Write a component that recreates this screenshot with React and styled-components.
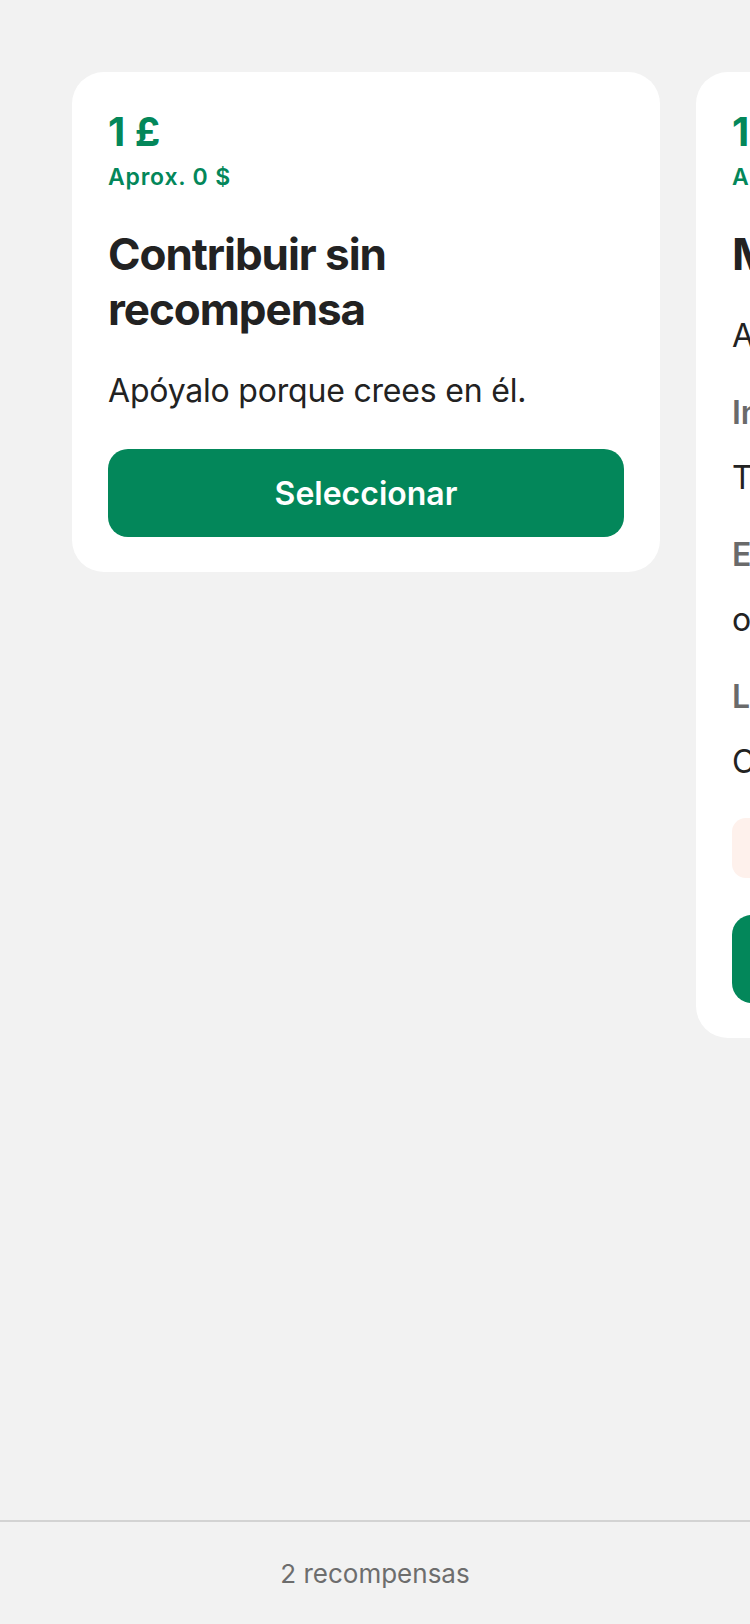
import React from 'react'
import styled, { createGlobalStyle } from 'styled-components'

const GlobalStyle = createGlobalStyle`
    html, body {
        margin: 0;
        padding: 0;
        background: #f2f2f2;
        overflow: hidden;
    }
    body {
        font-family: Inter, "Noto Sans", "Liberation Sans", sans-serif;
        color: #222222;
    }
`

const rewards = [
    {
        id: 0,
        price: '1 £',
        approx: 'Aprox. 0 $',
        title: 'Contribuir sin recompensa',
        description: 'Apóyalo porque crees en él.',
        details: [],
    },
    {
        id: 1,
        price: '15 £',
        approx: 'Aprox. 19 $',
        title: 'Mención especial',
        description: 'Agradecimiento en nuestra web.',
        details: [
            { label: 'Incluye', value: 'Tarjeta digital de agradecimiento' },
            { label: 'Entrega estimada', value: 'oct. 2025' },
            { label: 'Lugares de envío', value: 'Cualquier lugar del mundo' },
        ],
        notice: 'Quedan 12 de 50',
    },
]

function RewardCard({ reward }) {
    return (
        <Card>
            <Price>{reward.price}</Price>
            <Approx>{reward.approx}</Approx>
            <Title>{reward.title}</Title>
            <Description>{reward.description}</Description>
            {
                reward.details.map((d) => (
                    <Detail key={d.label}>
                        <Label>{d.label}</Label>
                        <Value>{d.value}</Value>
                    </Detail>
                ))
            }
            {reward.notice && <Notice>{reward.notice}</Notice>}
            <SelectButton $spaced={!!reward.notice}>Seleccionar</SelectButton>
        </Card>
    )
}

export default function App() {
    return (
        <>
            <GlobalStyle />
            <Page>
                <Carousel>
                    {rewards.map((r) => <RewardCard key={r.id} reward={r} />)}
                </Carousel>
                <Footer>2 recompensas</Footer>
            </Page>
        </>
    )
}

const Page = styled.div`
    height: 1624px;
    display: flex;
    flex-direction: column;
`
const Carousel = styled.div`
    flex: 1;
    display: flex;
    align-items: flex-start;
    gap: 36px;
    padding: 72px 0 0 72px;
    overflow: hidden;
`
const Card = styled.div`
    flex: 0 0 588px;
    box-sizing: border-box;
    display: flex;
    flex-direction: column;
    padding: 36px 36px 35px;
    background: #ffffff;
    border-radius: 32px;
`
const Price = styled.div`
    font-size: 40px;
    line-height: 48px;
    font-weight: 700;
    color: #03875a;
`
const Approx = styled.div`
    margin-top: 7px;
    font-size: 23px;
    line-height: 28px;
    font-weight: 600;
    letter-spacing: 0.8px;
    color: #03875a;
`
const Title = styled.h2`
    margin: 36px 0 0;
    font-size: 44px;
    line-height: 55px;
    font-weight: 700;
    letter-spacing: -1.05px;
    color: #222222;
`
const Description = styled.p`
    margin: 34px 0 0;
    font-size: 32px;
    line-height: 40px;
    letter-spacing: -0.2px;
    color: #222222;
    white-space: nowrap;
`
const Detail = styled.div`
    margin-top: 37px;
    display: flex;
    flex-direction: column;
    gap: 25px;
`
const Label = styled.div`
    font-size: 32px;
    line-height: 40px;
    font-weight: 600;
    color: #6a6a6a;
    white-space: nowrap;
`
const Value = styled.div`
    font-size: 32px;
    line-height: 40px;
    letter-spacing: -0.2px;
    color: #222222;
    white-space: nowrap;
`
const Notice = styled.div`
    margin-top: 36px;
    height: 60px;
    display: flex;
    align-items: center;
    padding: 0 24px;
    border-radius: 14px;
    background: #fef1ec;
    color: #a8392a;
    font-size: 26px;
    white-space: nowrap;
`
const SelectButton = styled.button`
    margin-top: ${(p) => (p.$spaced ? '37px' : '38px')};
    height: 88px;
    border: none;
    border-radius: 20px;
    background: #03875a;
    color: #ffffff;
    font-family: inherit;
    font-size: 32px;
    font-weight: 600;
    cursor: pointer;
`
const Footer = styled.footer`
    flex: 0 0 102px;
    display: flex;
    align-items: center;
    justify-content: center;
    border-top: 2px solid #d3d3d3;
    font-size: 26px;
    color: #6d6d6d;
`
